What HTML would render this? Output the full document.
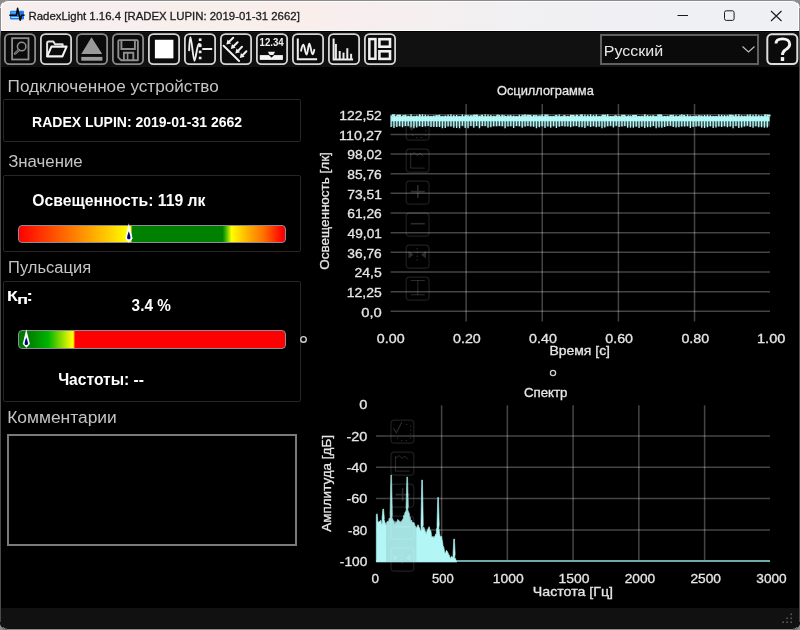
<!DOCTYPE html>
<html><head><meta charset="utf-8">
<style>
*{margin:0;padding:0;box-sizing:border-box}
html,body{width:800px;height:630px;overflow:hidden;background:#8c8c8c}
body{position:relative;font-family:"Liberation Sans",sans-serif}
svg{font-family:"Liberation Sans",sans-serif;will-change:transform}
.abs{position:absolute}
#win{position:absolute;left:0;top:0;width:800px;height:630px;border-radius:8px;overflow:hidden;background:#000}
#frame{position:absolute;left:0;top:0;width:800px;height:630px;border-radius:8px;border:1.2px solid #8c8c8c;border-left-color:transparent;border-right-color:transparent}
.side{position:absolute;top:8px;width:1.3px;height:614px;background:linear-gradient(180deg,#8c8c8c 0px,#8c8c8c 22px,#4a4a4a 30px,#4a4a4a 100%)}
#title{position:absolute;left:0;top:0;width:800px;height:30px;background:linear-gradient(90deg,#f6efee 0%,#f9eeec 38%,#f0f0f3 68%,#eff0f4 100%)}
#toolbar{position:absolute;left:0;top:31px;width:800px;height:36px;background:#111;border-top:1.5px solid #000}
.box{position:absolute;left:3px;width:298px;border:1px solid #262626;border-radius:2px}
.bar{position:absolute;border:1.5px solid #8e8c9c;border-radius:4px}
</style></head><body>
<div id="win">
  <div id="title">
    <div class="abs" style="left:1px;top:1px;width:798px;height:30px;border:1px solid rgba(255,255,255,0.85);border-bottom:none;border-radius:7px 7px 0 0"></div>
    <svg class="abs" style="left:0;top:0" width="40" height="31">
      <rect x="10" y="10.8" width="14" height="8.6" rx="1.2" fill="#1a7cf0"/>
      <rect x="11" y="11.6" width="5" height="2" fill="#7ab8ff" opacity="0.6"/>
      <line x1="11.3" y1="17.4" x2="19" y2="17.4" stroke="#d8ecff" stroke-width="0.9"/>
      <path d="M9.3,15.3 L16.4,15.3 L17.6,8.4 L20.2,20.2 L21.6,15.3 L24.6,15.3" fill="none" stroke="#0d0d0d" stroke-width="1.6" stroke-linejoin="round"/>
    </svg>
    <svg class="abs" style="left:0;top:0" width="800" height="31">
      <line x1="677.5" y1="15.5" x2="688" y2="15.5" stroke="#1a1a1a" stroke-width="1"/>
      <rect x="724.5" y="10.8" width="9.6" height="9.6" rx="1.8" fill="none" stroke="#1a1a1a" stroke-width="1"/>
      <path d="M771,11 L781.5,21 M781.5,11 L771,21" stroke="#1a1a1a" stroke-width="1.1"/>
    </svg>
  </div>
  <div class="abs" style="left:0;top:30px;width:800px;height:1px;background:#fff"></div>
  <div id="toolbar"></div>
  <svg class="abs" style="left:0;top:0" width="800" height="70">
<rect x="4.9" y="34.1" width="30.2" height="30.1" rx="4.5" fill="#0b0b0b" stroke="#8a8a8a" stroke-width="1.8"/>
<rect x="40.9" y="34.1" width="30.2" height="30.1" rx="4.5" fill="#0b0b0b" stroke="#d4d4d4" stroke-width="1.8"/>
<rect x="76.9" y="34.1" width="30.2" height="30.1" rx="4.5" fill="#0b0b0b" stroke="#8a8a8a" stroke-width="1.8"/>
<rect x="112.9" y="34.1" width="30.2" height="30.1" rx="4.5" fill="#0b0b0b" stroke="#8a8a8a" stroke-width="1.8"/>
<rect x="148.9" y="34.1" width="30.2" height="30.1" rx="4.5" fill="#0b0b0b" stroke="#d4d4d4" stroke-width="1.8"/>
<rect x="184.9" y="34.1" width="30.2" height="30.1" rx="4.5" fill="#0b0b0b" stroke="#d4d4d4" stroke-width="1.8"/>
<rect x="220.9" y="34.1" width="30.2" height="30.1" rx="4.5" fill="#0b0b0b" stroke="#d4d4d4" stroke-width="1.8"/>
<rect x="256.9" y="34.1" width="30.2" height="30.1" rx="4.5" fill="#0b0b0b" stroke="#d4d4d4" stroke-width="1.8"/>
<rect x="292.9" y="34.1" width="30.2" height="30.1" rx="4.5" fill="#0b0b0b" stroke="#d4d4d4" stroke-width="1.8"/>
<rect x="328.9" y="34.1" width="30.2" height="30.1" rx="4.5" fill="#0b0b0b" stroke="#d4d4d4" stroke-width="1.8"/>
<rect x="364.9" y="34.1" width="30.2" height="30.1" rx="4.5" fill="#0b0b0b" stroke="#d4d4d4" stroke-width="1.8"/>
<rect x="12.1" y="38.2" width="16.4" height="21.3" fill="none" stroke="#8e8e8e" stroke-width="1.8"/>
<circle cx="21.65" cy="46.6" r="4.25" fill="none" stroke="#8e8e8e" stroke-width="1.5"/>
<line x1="18.9" y1="50" x2="15" y2="53.6" stroke="#8e8e8e" stroke-width="2.4" stroke-linecap="round"/>
<line x1="18.9" y1="50" x2="15" y2="53.6" stroke="#2a2a2a" stroke-width="0.8" stroke-linecap="round"/>
<path d="M47.1,57 L47.1,43.2 Q47.1,41.6 48.8,41.6 L53.4,41.6 L55,44.2 L62.6,44.2 L62.6,46" fill="none" stroke="#e2e2e2" stroke-width="2" stroke-linejoin="round"/>
<path d="M47.2,56.4 L51.4,46.6 L66.6,46.6 L62.4,56.4 Z" fill="#0b0b0b" stroke="#f4f4f4" stroke-width="2.1" stroke-linejoin="round"/>
<path d="M91.5,37.3 L102.2,54.1 L81.3,54.1 Z" fill="#9a9a9a"/>
<rect x="81.3" y="56.9" width="21.1" height="3.8" fill="#9a9a9a"/>
<path d="M118.3,41.3 Q118.3,40.1 119.5,40.1 L136.7,40.1 Q137.9,40.1 137.9,41.3 L137.9,60.2 L121,60.2 L118.3,57.4 Z" fill="none" stroke="#8e8e8e" stroke-width="1.9" stroke-linejoin="round"/>
<path d="M121.4,40.1 L121.4,49 L134.9,49 L134.9,40.1" fill="none" stroke="#8e8e8e" stroke-width="1.9"/>
<path d="M123.9,60.2 L123.9,52.8 L133.3,52.8 L133.3,60.2" fill="none" stroke="#8e8e8e" stroke-width="1.9"/>
<rect x="126.8" y="53" width="1.6" height="7.2" fill="#8e8e8e"/>
<rect x="154.9" y="39.75" width="18.5" height="18.6" fill="#fff"/>
<path d="M189.1,50.3 C189.4,44 189.7,37.3 190.4,37.3 C191.6,37.3 193.2,60.7 194.4,60.7 C195.6,60.7 197,45.5 198.7,44.2 C199.5,43.8 200.2,44.4 200.6,45" fill="none" stroke="#f0f0f0" stroke-width="1.9" stroke-linecap="round"/>
<rect x="198.8" y="38.4" width="2.7" height="2.6" fill="#f0f0f0"/>
<rect x="198.8" y="44.5" width="2.7" height="2.6" fill="#f0f0f0"/>
<rect x="198.8" y="50.6" width="2.7" height="2.6" fill="#f0f0f0"/>
<rect x="198.8" y="56.7" width="2.7" height="2.6" fill="#f0f0f0"/>
<rect x="202.3" y="48" width="9.9" height="2" fill="#f0f0f0"/>
<line x1="223.6" y1="45.7" x2="239.1" y2="61" stroke="#f0f0f0" stroke-width="2" stroke-linecap="round"/>
<line x1="233.20" y1="37.80" x2="229.34" y2="41.50" stroke="#f0f0f0" stroke-width="2" stroke-linecap="round"/>
<path d="M226.30,44.40 L227.54,39.62 L231.13,43.38 Z" fill="#f0f0f0"/>
<line x1="237.60" y1="42.30" x2="233.81" y2="45.97" stroke="#f0f0f0" stroke-width="2" stroke-linecap="round"/>
<path d="M230.80,48.90 L232.00,44.11 L235.62,47.84 Z" fill="#f0f0f0"/>
<line x1="242.00" y1="46.80" x2="238.29" y2="50.45" stroke="#f0f0f0" stroke-width="2" stroke-linecap="round"/>
<path d="M235.30,53.40 L236.47,48.60 L240.12,52.30 Z" fill="#f0f0f0"/>
<line x1="246.40" y1="51.30" x2="242.77" y2="54.93" stroke="#f0f0f0" stroke-width="2" stroke-linecap="round"/>
<path d="M239.80,57.90 L240.93,53.09 L244.61,56.77 Z" fill="#f0f0f0"/>
<text x="259.52" y="46" font-size="10" font-weight="bold" fill="#f0f0f0" textLength="24.25" lengthAdjust="spacingAndGlyphs">12.34</text>
<path d="M267.9,51.8 L275,51.8 Q273.5,55.8 271.5,55.8 Q269.5,55.8 267.9,51.8 Z" fill="#f0f0f0"/>
<rect x="259.8" y="55.1" width="23.1" height="4.8" fill="#f4f4f4"/>
<path d="M268.9,55.1 L274.2,55.1 L271.5,57.7 Z" fill="#0b0b0b"/>
<path d="M297.8,38.6 L297.8,59.2 L317.1,59.2" fill="none" stroke="#f0f0f0" stroke-width="2"/>
<path d="M301.1,50.8 C302,46 302.6,44.7 303.4,44.7 C304.6,44.7 305.3,54.6 306.5,54.6 C307.8,54.6 308.2,43.7 309.3,43.7 C310.5,43.7 311.3,54.3 312.6,54.3 C313.5,54.3 314,51 314.3,49.8" fill="none" stroke="#f0f0f0" stroke-width="1.9" stroke-linecap="round"/>
<path d="M333.6,38.6 L333.6,59.4 L353.1,59.4" fill="none" stroke="#f0f0f0" stroke-width="2"/>
<rect x="334.9" y="43.9" width="2" height="15.5" fill="#e8e8e8"/>
<rect x="338.7" y="51" width="2" height="8.399999999999999" fill="#e8e8e8"/>
<rect x="342.5" y="52.6" width="2" height="6.799999999999997" fill="#e8e8e8"/>
<rect x="346.3" y="48.2" width="2" height="11.199999999999996" fill="#e8e8e8"/>
<rect x="350.1" y="53.8" width="2" height="5.600000000000001" fill="#e8e8e8"/>
<rect x="369.35" y="39.1" width="6.1" height="19.65" fill="none" stroke="#f0f0f0" stroke-width="2.5"/>
<rect x="379.4" y="39.2" width="10.6" height="7.5" fill="none" stroke="#f0f0f0" stroke-width="2.6"/>
<rect x="379.4" y="51.3" width="10.6" height="7.6" fill="none" stroke="#f0f0f0" stroke-width="2.6"/>
    <rect x="601" y="35" width="157" height="29" fill="#0a0a0a" stroke="#606060" stroke-width="2"/>
    <path d="M742.5,46.5 L748.5,52 L754.5,46.5" fill="none" stroke="#bdbdbd" stroke-width="1.2"/>
    <rect x="767.3" y="34.3" width="30" height="29.7" rx="4.5" fill="#0b0b0b" stroke="#dedede" stroke-width="2"/>
    <path d="M776,43.6 C776,40.3 778.8,38.9 782.6,38.9 C786.6,38.9 789.7,40.8 789.7,44.3 C789.7,47.6 787.2,48.6 785.2,50 C783.2,51.4 782.5,52.6 782.5,55" fill="none" stroke="#f4f4f4" stroke-width="2.9"/><rect x="780.8" y="57.1" width="3.4" height="3.9" fill="#f4f4f4"/>
  </svg>

  <div class="box" style="top:99px;height:43px"></div>
  <div class="box" style="top:175px;height:77px"></div>
  <div class="bar" style="top:224.9px;left:18px;width:268px;height:18.1px;background:linear-gradient(90deg,#f00 0%,#ff8000 21%,#ffd000 34%,#ff0 41%,#ff0 42%,#008000 42.6%,#008000 76.5%,#30b000 77.6%,#ff0 79.9%,#ffb000 86%,#ff7000 92%,#f00 99%)"></div>
  <div class="box" style="top:281px;height:121px"></div>
  <div class="bar" style="top:330.4px;left:17.6px;width:268.4px;height:18.6px;background:linear-gradient(90deg,#007800 0%,#008000 4%,#00b400 11%,#ffff00 20%,#ffff00 20.4%,#f00 21.1%,#f00 100%)"></div>
  <div class="abs" style="left:7px;top:434px;width:290px;height:112px;border:2px solid #7a7a7a"></div>

  <svg class="abs" style="left:0;top:0" width="800" height="630">
<text x="7.63" y="92" font-size="16" fill="#c4c4c4" textLength="211.07" lengthAdjust="spacingAndGlyphs">Подключенное устройство</text>
<text x="32.09" y="126.5" font-size="13.8" font-weight="bold" fill="#fff" textLength="210.00" lengthAdjust="spacingAndGlyphs">RADEX LUPIN: 2019-01-31 2662</text>
<text x="8.16" y="167.1" font-size="16" fill="#c4c4c4" textLength="74.49" lengthAdjust="spacingAndGlyphs">Значение</text>
<text x="32.37" y="205.5" font-size="15.9" font-weight="bold" fill="#fff" textLength="173.04" lengthAdjust="spacingAndGlyphs">Освещенность: 119 лк</text>
<text x="8.08" y="273.1" font-size="16" fill="#c4c4c4" textLength="83.00" lengthAdjust="spacingAndGlyphs">Пульсация</text>
<text x="131.62" y="311.3" font-size="16.3" font-weight="bold" fill="#fff" textLength="39.22" lengthAdjust="spacingAndGlyphs">3.4 %</text>
<text x="58.14" y="385" font-size="16" font-weight="bold" fill="#fff" textLength="85.86" lengthAdjust="spacingAndGlyphs">Частоты: --</text>
<text x="7.21" y="422.5" font-size="16" fill="#c4c4c4" textLength="109.58" lengthAdjust="spacingAndGlyphs">Комментарии</text>
<text x="603.72" y="55.9" font-size="15.4" fill="#e8e8e8" textLength="59.41" lengthAdjust="spacingAndGlyphs">Русский</text>
<text stroke="#1c1c1c" stroke-width="0.3" x="28.49" y="19.75" font-size="11.6" fill="#1c1c1c" textLength="271.35" lengthAdjust="spacingAndGlyphs">RadexLight 1.16.4 [RADEX LUPIN: 2019-01-31 2662]</text>
<text x="6.94" y="300.9" font-size="15.5" font-weight="bold" fill="#fff" textLength="10.86" lengthAdjust="spacingAndGlyphs">К</text>
<text x="17.01" y="304.2" font-size="13.3" font-weight="bold" fill="#fff" textLength="11.17" lengthAdjust="spacingAndGlyphs">п</text>
<text x="26.23" y="300.9" font-size="15.5" font-weight="bold" fill="#fff" textLength="6.90" lengthAdjust="spacingAndGlyphs">:</text>
    <path d="M128.8,223.2 L132.6,238.5 L128.8,242.8 L125.1,238.5 Z" fill="#fff"/><path d="M128.8,231.3 C129.8,234 130.5,236.5 130.5,237.8 C130.5,239.8 127.1,239.8 127.1,237.8 C127.1,236.5 127.8,234 128.8,231.3 Z" fill="#00007a"/>
    <path d="M26.3,329.2 L29.9,344 L26.3,347.8 L22.7,344 Z" fill="#fff"/><path d="M26.3,337.4 C27.3,340 28,342.2 28,343.4 C28,345.4 24.6,345.4 24.6,343.4 C24.6,342.2 25.3,340 26.3,337.4 Z" fill="#00007a"/>
<line x1="390.6" y1="114.75" x2="770" y2="114.75" stroke="rgba(255,255,255,0.27)" stroke-width="1.5"/>
<line x1="390.6" y1="134.41" x2="770" y2="134.41" stroke="rgba(255,255,255,0.27)" stroke-width="1.5"/>
<line x1="390.6" y1="154.06" x2="770" y2="154.06" stroke="rgba(255,255,255,0.27)" stroke-width="1.5"/>
<line x1="390.6" y1="173.72" x2="770" y2="173.72" stroke="rgba(255,255,255,0.27)" stroke-width="1.5"/>
<line x1="390.6" y1="193.37" x2="770" y2="193.37" stroke="rgba(255,255,255,0.27)" stroke-width="1.5"/>
<line x1="390.6" y1="213.03" x2="770" y2="213.03" stroke="rgba(255,255,255,0.27)" stroke-width="1.5"/>
<line x1="390.6" y1="232.68" x2="770" y2="232.68" stroke="rgba(255,255,255,0.27)" stroke-width="1.5"/>
<line x1="390.6" y1="252.34" x2="770" y2="252.34" stroke="rgba(255,255,255,0.27)" stroke-width="1.5"/>
<line x1="390.6" y1="271.99" x2="770" y2="271.99" stroke="rgba(255,255,255,0.27)" stroke-width="1.5"/>
<line x1="390.6" y1="291.64" x2="770" y2="291.64" stroke="rgba(255,255,255,0.27)" stroke-width="1.5"/>
<line x1="390.6" y1="311.30" x2="770" y2="311.30" stroke="rgba(255,255,255,0.27)" stroke-width="1.5"/>
<line x1="466.13" y1="104" x2="466.13" y2="321.4" stroke="rgba(255,255,255,0.27)" stroke-width="1.5"/>
<line x1="542.26" y1="104" x2="542.26" y2="321.4" stroke="rgba(255,255,255,0.27)" stroke-width="1.5"/>
<line x1="618.39" y1="104" x2="618.39" y2="321.4" stroke="rgba(255,255,255,0.27)" stroke-width="1.5"/>
<line x1="694.52" y1="104" x2="694.52" y2="321.4" stroke="rgba(255,255,255,0.27)" stroke-width="1.5"/>
<text x="339.15" y="120.05" font-size="13" stroke="#e6e6e6" stroke-width="0.3" fill="#e6e6e6" textLength="42.73" lengthAdjust="spacingAndGlyphs">122,52</text>
<text x="339.12" y="139.71" font-size="13" stroke="#e6e6e6" stroke-width="0.3" fill="#e6e6e6" textLength="42.78" lengthAdjust="spacingAndGlyphs">110,27</text>
<text x="347.28" y="159.36" font-size="13" stroke="#e6e6e6" stroke-width="0.3" fill="#e6e6e6" textLength="34.65" lengthAdjust="spacingAndGlyphs">98,02</text>
<text x="347.28" y="179.02" font-size="13" stroke="#e6e6e6" stroke-width="0.3" fill="#e6e6e6" textLength="34.51" lengthAdjust="spacingAndGlyphs">85,76</text>
<text x="347.21" y="198.67" font-size="13" stroke="#e6e6e6" stroke-width="0.3" fill="#e6e6e6" textLength="34.65" lengthAdjust="spacingAndGlyphs">73,51</text>
<text x="347.21" y="218.33" font-size="13" stroke="#e6e6e6" stroke-width="0.3" fill="#e6e6e6" textLength="34.58" lengthAdjust="spacingAndGlyphs">61,26</text>
<text x="347.63" y="237.98" font-size="13" stroke="#e6e6e6" stroke-width="0.3" fill="#e6e6e6" textLength="34.22" lengthAdjust="spacingAndGlyphs">49,01</text>
<text x="347.35" y="257.63" font-size="13" stroke="#e6e6e6" stroke-width="0.3" fill="#e6e6e6" textLength="34.44" lengthAdjust="spacingAndGlyphs">36,76</text>
<text x="354.50" y="277.29" font-size="13" stroke="#e6e6e6" stroke-width="0.3" fill="#e6e6e6" textLength="27.28" lengthAdjust="spacingAndGlyphs">24,5</text>
<text x="346.85" y="296.94" font-size="13" stroke="#e6e6e6" stroke-width="0.3" fill="#e6e6e6" textLength="34.94" lengthAdjust="spacingAndGlyphs">12,25</text>
<text x="361.21" y="316.6" font-size="13" stroke="#e6e6e6" stroke-width="0.3" fill="#e6e6e6" textLength="20.51" lengthAdjust="spacingAndGlyphs">0,0</text>
<text x="376.88" y="342.7" font-size="13" stroke="#e6e6e6" stroke-width="0.3" fill="#e6e6e6" textLength="27.79" lengthAdjust="spacingAndGlyphs">0.00</text>
<text x="453.01" y="342.7" font-size="13" stroke="#e6e6e6" stroke-width="0.3" fill="#e6e6e6" textLength="27.79" lengthAdjust="spacingAndGlyphs">0.20</text>
<text x="529.14" y="342.7" font-size="13" stroke="#e6e6e6" stroke-width="0.3" fill="#e6e6e6" textLength="27.79" lengthAdjust="spacingAndGlyphs">0.40</text>
<text x="605.27" y="342.7" font-size="13" stroke="#e6e6e6" stroke-width="0.3" fill="#e6e6e6" textLength="27.79" lengthAdjust="spacingAndGlyphs">0.60</text>
<text x="681.40" y="342.7" font-size="13" stroke="#e6e6e6" stroke-width="0.3" fill="#e6e6e6" textLength="27.79" lengthAdjust="spacingAndGlyphs">0.80</text>
<text x="757.01" y="342.7" font-size="13" stroke="#e6e6e6" stroke-width="0.3" fill="#e6e6e6" textLength="28.32" lengthAdjust="spacingAndGlyphs">1.00</text>
<text x="549.48" y="355" font-size="13" stroke="#e6e6e6" stroke-width="0.3" fill="#e6e6e6" textLength="60.52" lengthAdjust="spacingAndGlyphs">Время [с]</text>
<text x="496.92" y="95" font-size="13.2" stroke="#e6e6e6" stroke-width="0.3" fill="#e6e6e6" textLength="96.90" lengthAdjust="spacingAndGlyphs">Осциллограмма</text>
<text transform="translate(328.7,269.2) rotate(-90)" x="-0.61" y="0" font-size="13.4" stroke="#e6e6e6" stroke-width="0.3" fill="#e6e6e6" textLength="117.66" lengthAdjust="spacingAndGlyphs">Освещенность [лк]</text>
<rect x="406.2" y="117.2" width="22.8" height="23" rx="3.5" fill="none" stroke="rgba(255,255,255,0.12)" stroke-width="1.2"/>
<rect x="406.2" y="149.2" width="22.8" height="23" rx="3.5" fill="none" stroke="rgba(255,255,255,0.12)" stroke-width="1.2"/>
<rect x="406.2" y="181.2" width="22.8" height="23" rx="3.5" fill="none" stroke="rgba(255,255,255,0.12)" stroke-width="1.2"/>
<rect x="406.2" y="213.2" width="22.8" height="23" rx="3.5" fill="none" stroke="rgba(255,255,255,0.12)" stroke-width="1.2"/>
<rect x="406.2" y="245.2" width="22.8" height="23" rx="3.5" fill="none" stroke="rgba(255,255,255,0.12)" stroke-width="1.2"/>
<rect x="406.2" y="277.2" width="22.8" height="23" rx="3.5" fill="none" stroke="rgba(255,255,255,0.12)" stroke-width="1.2"/>
<g transform="translate(15.30,-302.40)"><path d="M393.4,427.8 L396.3,432.2 L401.8,421.4" fill="none" stroke="rgba(255,255,255,0.17)" stroke-width="1.1"/><rect x="406.0" y="423.2" width="1.2" height="1.2" fill="rgba(255,255,255,0.17)"/><rect x="410.0" y="425.2" width="1.2" height="1.2" fill="rgba(255,255,255,0.17)"/><rect x="410.0" y="429.0" width="1.2" height="1.2" fill="rgba(255,255,255,0.17)"/><rect x="410.0" y="432.59999999999997" width="1.2" height="1.2" fill="rgba(255,255,255,0.17)"/><rect x="409.7" y="436.9" width="1.2" height="1.2" fill="rgba(255,255,255,0.17)"/><rect x="405.4" y="439.4" width="1.2" height="1.2" fill="rgba(255,255,255,0.17)"/><rect x="400.9" y="439.4" width="1.2" height="1.2" fill="rgba(255,255,255,0.17)"/><rect x="396.9" y="436.9" width="1.2" height="1.2" fill="rgba(255,255,255,0.17)"/><path d="M395.4,455.5 V470.5 H409.4 M396,457.5 L399,455 L402,457.8 L404.8,455.6 L408,459" fill="none" stroke="rgba(255,255,255,0.17)" stroke-width="1"/><path d="M402.5,487.5 V500.5 M395.5,494 H409.5" fill="none" stroke="rgba(255,255,255,0.17)" stroke-width="1.6"/><path d="M395.5,526.1 H409.5" fill="none" stroke="rgba(255,255,255,0.17)" stroke-width="1.6"/><path d="M393.2,553.5 L398.2,557.2 L393.2,560.9 Z M410.7,553.5 L405.7,557.2 L410.7,560.9 Z" fill="rgba(255,255,255,0.17)"/><path d="M401.9,550.5 V552 M401.9,554.2 V555.7 M401.9,557.9 V559.4 M401.9,561.6 V563.1" stroke="rgba(255,255,255,0.17)" stroke-width="1.1"/><path d="M395.5,582.9 H409.5 M395.5,597.2 H409.5 M402.5,582.9 V597.2" fill="none" stroke="rgba(255,255,255,0.17)" stroke-width="1"/></g>
<rect x="391.1" y="116.2" width="378.6" height="5.2" fill="#b2f6f6"/>
<rect x="391.1" y="121.4" width="378.6" height="5" fill="#b2f6f6" opacity="0.3"/>
<path d="M391.10,115.32V126.93M393.95,115.13V128.11M396.80,115.37V127.07M399.65,115.22V126.26M402.50,115.79V127.37M405.35,114.81V126.04M408.20,115.82V126.03M411.05,114.28V127.53M413.90,116.13V128.26M416.75,115.43V127.43M419.60,114.23V126.19M422.45,114.32V127.12M425.30,114.68V126.28M428.15,115.13V125.88M431.00,115.88V126.90M433.85,115.48V127.10M436.70,115.52V127.05M439.55,114.76V126.94M442.40,116.19V128.29M445.25,115.62V127.90M448.10,114.66V126.59M450.95,114.34V126.52M453.80,115.00V127.72M456.65,114.97V127.92M459.50,115.89V128.20M462.35,114.62V125.80M465.20,115.14V128.08M468.05,114.99V128.25M470.90,115.46V125.98M473.75,114.74V127.75M476.60,114.87V126.02M479.45,115.72V128.21M482.30,114.69V126.09M485.15,114.32V126.05M488.00,114.56V127.79M490.85,115.09V127.20M493.70,115.66V126.28M496.55,115.49V126.13M499.40,115.04V126.09M502.25,114.74V126.33M505.10,115.81V128.23M507.95,115.97V126.56M510.80,114.99V126.33M513.65,115.48V127.94M516.50,116.18V126.05M519.35,114.72V126.33M522.20,114.86V127.73M525.05,114.35V126.54M527.90,115.37V126.03M530.75,115.40V126.41M533.60,115.11V126.73M536.45,115.17V128.20M539.30,115.93V127.24M542.15,114.51V126.26M545.00,115.84V128.07M547.85,114.58V126.42M550.70,116.08V127.65M553.55,116.10V126.29M556.40,115.41V128.01M559.25,114.41V126.85M562.10,116.13V125.90M564.95,115.61V126.40M567.80,115.85V126.44M570.65,114.79V127.29M573.50,115.64V126.24M576.35,114.66V125.97M579.20,115.90V127.20M582.05,114.76V127.34M584.90,114.61V128.09M587.75,114.74V125.84M590.60,114.32V126.91M593.45,114.94V126.24M596.30,114.46V127.23M599.15,115.98V126.71M602.00,115.51V128.25M604.85,115.37V127.53M607.70,114.27V126.15M610.55,116.02V125.84M613.40,116.13V127.55M616.25,115.47V125.85M619.10,115.66V127.01M621.95,116.20V126.60M624.80,115.29V125.99M627.65,116.00V127.64M630.50,115.61V127.64M633.35,116.03V127.78M636.20,115.57V126.68M639.05,115.94V128.05M641.90,115.78V126.84M644.75,115.35V127.96M647.60,114.96V127.36M650.45,115.42V127.26M653.30,115.48V126.00M656.15,115.96V128.28M659.00,114.98V127.62M661.85,115.36V127.64M664.70,115.88V126.90M667.55,115.70V126.01M670.40,115.40V125.87M673.25,114.66V127.00M676.10,115.19V127.55M678.95,116.04V127.34M681.80,114.22V126.44M684.65,115.56V126.55M687.50,114.54V126.31M690.35,115.52V128.06M693.20,115.98V126.90M696.05,115.53V126.62M698.90,115.06V126.30M701.75,116.03V127.81M704.60,114.97V128.00M707.45,114.83V127.26M710.30,115.19V126.14M713.15,115.90V127.89M716.00,116.10V127.58M718.85,114.54V126.49M721.70,114.75V126.93M724.55,115.03V126.34M727.40,115.19V127.36M730.25,115.88V126.59M733.10,115.10V128.26M735.95,114.26V125.99M738.80,114.28V127.98M741.65,115.34V127.57M744.50,115.78V126.57M747.35,114.47V125.85M750.20,114.25V126.94M753.05,114.67V127.87M755.90,114.29V126.15M758.75,115.09V127.37M761.60,115.51V127.37M764.45,116.12V127.82M767.30,114.60V127.51" stroke="#b4f8f8" stroke-width="1.35" fill="none"/>
<rect x="392.00" y="114.31" width="3.16" height="2.09" fill="#b2f6f6"/><rect x="397.00" y="114.65" width="4.00" height="1.75" fill="#b2f6f6"/><rect x="402.56" y="115.10" width="3.94" height="1.30" fill="#b2f6f6"/><rect x="418.83" y="115.11" width="1.95" height="1.29" fill="#b2f6f6"/><rect x="435.25" y="115.24" width="3.78" height="1.16" fill="#b2f6f6"/><rect x="465.38" y="115.02" width="1.79" height="1.38" fill="#b2f6f6"/><rect x="469.66" y="115.35" width="3.21" height="1.05" fill="#b2f6f6"/><rect x="473.81" y="114.74" width="4.30" height="1.66" fill="#b2f6f6"/><rect x="480.64" y="114.97" width="1.99" height="1.43" fill="#b2f6f6"/><rect x="496.56" y="114.68" width="2.27" height="1.72" fill="#b2f6f6"/><rect x="501.24" y="115.40" width="3.74" height="1.00" fill="#b2f6f6"/><rect x="507.01" y="115.40" width="2.59" height="1.00" fill="#b2f6f6"/><rect x="522.11" y="115.09" width="3.38" height="1.31" fill="#b2f6f6"/><rect x="526.35" y="114.82" width="4.89" height="1.58" fill="#b2f6f6"/><rect x="533.81" y="115.20" width="3.47" height="1.20" fill="#b2f6f6"/><rect x="538.22" y="115.54" width="3.39" height="0.86" fill="#b2f6f6"/><rect x="544.44" y="114.47" width="2.44" height="1.93" fill="#b2f6f6"/><rect x="554.84" y="115.10" width="2.61" height="1.30" fill="#b2f6f6"/><rect x="563.09" y="115.19" width="2.18" height="1.21" fill="#b2f6f6"/><rect x="570.55" y="114.96" width="4.06" height="1.44" fill="#b2f6f6"/><rect x="575.96" y="114.87" width="2.19" height="1.53" fill="#b2f6f6"/><rect x="579.78" y="114.51" width="2.95" height="1.89" fill="#b2f6f6"/><rect x="601.71" y="114.71" width="4.66" height="1.69" fill="#b2f6f6"/><rect x="614.22" y="115.24" width="1.97" height="1.16" fill="#b2f6f6"/><rect x="621.12" y="114.82" width="4.26" height="1.58" fill="#b2f6f6"/><rect x="627.69" y="115.19" width="1.56" height="1.21" fill="#b2f6f6"/><rect x="632.06" y="114.96" width="4.89" height="1.44" fill="#b2f6f6"/><rect x="643.89" y="114.35" width="1.75" height="2.05" fill="#b2f6f6"/><rect x="652.08" y="115.39" width="2.15" height="1.01" fill="#b2f6f6"/><rect x="657.20" y="114.38" width="4.74" height="2.02" fill="#b2f6f6"/><rect x="669.48" y="114.86" width="3.13" height="1.54" fill="#b2f6f6"/><rect x="678.94" y="115.26" width="2.13" height="1.14" fill="#b2f6f6"/><rect x="682.76" y="114.97" width="2.18" height="1.43" fill="#b2f6f6"/><rect x="698.96" y="115.58" width="3.60" height="0.82" fill="#b2f6f6"/><rect x="728.73" y="114.74" width="4.03" height="1.66" fill="#b2f6f6"/><rect x="734.59" y="115.13" width="1.54" height="1.27" fill="#b2f6f6"/><rect x="747.61" y="115.60" width="3.37" height="0.80" fill="#b2f6f6"/><rect x="764.11" y="114.37" width="2.40" height="2.03" fill="#b2f6f6"/><rect x="767.74" y="114.63" width="2.81" height="1.77" fill="#b2f6f6"/>
<line x1="376" y1="436.00" x2="770" y2="436.00" stroke="rgba(255,255,255,0.27)" stroke-width="1.5"/>
<line x1="376" y1="467.30" x2="770" y2="467.30" stroke="rgba(255,255,255,0.27)" stroke-width="1.5"/>
<line x1="376" y1="498.60" x2="770" y2="498.60" stroke="rgba(255,255,255,0.27)" stroke-width="1.5"/>
<line x1="376" y1="529.90" x2="770" y2="529.90" stroke="rgba(255,255,255,0.27)" stroke-width="1.5"/>
<line x1="376" y1="561.20" x2="770" y2="561.20" stroke="rgba(255,255,255,0.27)" stroke-width="1.5"/>
<line x1="441.60" y1="405.3" x2="441.60" y2="561" stroke="rgba(255,255,255,0.27)" stroke-width="1.5"/>
<line x1="507.35" y1="405.3" x2="507.35" y2="561" stroke="rgba(255,255,255,0.27)" stroke-width="1.5"/>
<line x1="573.10" y1="405.3" x2="573.10" y2="561" stroke="rgba(255,255,255,0.27)" stroke-width="1.5"/>
<line x1="638.85" y1="405.3" x2="638.85" y2="561" stroke="rgba(255,255,255,0.27)" stroke-width="1.5"/>
<line x1="704.60" y1="405.3" x2="704.60" y2="561" stroke="rgba(255,255,255,0.27)" stroke-width="1.5"/>
<text x="359.22" y="409.4" font-size="13" stroke="#e6e6e6" stroke-width="0.3" fill="#e6e6e6" textLength="8.11" lengthAdjust="spacingAndGlyphs">0</text>
<text x="346.45" y="440.7" font-size="13" stroke="#e6e6e6" stroke-width="0.3" fill="#e6e6e6" textLength="20.86" lengthAdjust="spacingAndGlyphs">-20</text>
<text x="346.45" y="472.0" font-size="13" stroke="#e6e6e6" stroke-width="0.3" fill="#e6e6e6" textLength="20.86" lengthAdjust="spacingAndGlyphs">-40</text>
<text x="346.45" y="503.3" font-size="13" stroke="#e6e6e6" stroke-width="0.3" fill="#e6e6e6" textLength="20.86" lengthAdjust="spacingAndGlyphs">-60</text>
<text x="348.00" y="534.6" font-size="13" stroke="#e6e6e6" stroke-width="0.3" fill="#e6e6e6" textLength="19.27" lengthAdjust="spacingAndGlyphs">-80</text>
<text x="339.88" y="565.9" font-size="13" stroke="#e6e6e6" stroke-width="0.3" fill="#e6e6e6" textLength="27.42" lengthAdjust="spacingAndGlyphs">-100</text>
<text x="371.56" y="582.7" font-size="13" stroke="#e6e6e6" stroke-width="0.3" fill="#e6e6e6" textLength="7.53" lengthAdjust="spacingAndGlyphs">0</text>
<text x="431.93" y="582.7" font-size="13" stroke="#e6e6e6" stroke-width="0.3" fill="#e6e6e6" textLength="21.72" lengthAdjust="spacingAndGlyphs">500</text>
<text x="492.81" y="582.7" font-size="13" stroke="#e6e6e6" stroke-width="0.3" fill="#e6e6e6" textLength="30.92" lengthAdjust="spacingAndGlyphs">1000</text>
<text x="558.56" y="582.7" font-size="13" stroke="#e6e6e6" stroke-width="0.3" fill="#e6e6e6" textLength="30.92" lengthAdjust="spacingAndGlyphs">1500</text>
<text x="624.66" y="582.7" font-size="13" stroke="#e6e6e6" stroke-width="0.3" fill="#e6e6e6" textLength="30.56" lengthAdjust="spacingAndGlyphs">2000</text>
<text x="690.41" y="582.7" font-size="13" stroke="#e6e6e6" stroke-width="0.3" fill="#e6e6e6" textLength="30.56" lengthAdjust="spacingAndGlyphs">2500</text>
<text x="756.30" y="582.7" font-size="13" stroke="#e6e6e6" stroke-width="0.3" fill="#e6e6e6" textLength="30.42" lengthAdjust="spacingAndGlyphs">3000</text>
<text x="532.87" y="596" font-size="13" stroke="#e6e6e6" stroke-width="0.3" fill="#e6e6e6" textLength="80.19" lengthAdjust="spacingAndGlyphs">Частота [Гц]</text>
<text x="523.94" y="397.1" font-size="13.2" stroke="#e6e6e6" stroke-width="0.3" fill="#e6e6e6" textLength="43.53" lengthAdjust="spacingAndGlyphs">Спектр</text>
<text transform="translate(330.8,531.75) rotate(-90)" x="0.00" y="0" font-size="13.4" stroke="#e6e6e6" stroke-width="0.3" fill="#e6e6e6" textLength="96.72" lengthAdjust="spacingAndGlyphs">Амплитуда [дБ]</text>
<line x1="376" y1="561" x2="770" y2="561" stroke="#72aaaa" stroke-width="2"/>
<polygon points="376.3,562 376.3,514.5 377.2,513.7 377.8,521.193285423647 378.3,522.0737183656342 378.8,522.1446194098103 379.3,522.1158409080866 379.8,520.9676754391678 380.3,521.8914399893295 380.8,519.9328167305076 381.3,522.2299924940099 381.8,524.6587414943946 382.3,523.6867185700382 382.09999999999997,518.0400000000001 382.84999999999997,509 383.55,509 384.3,518.0400000000001 383.7,522.672881573602 384.2,520.16225908689 384.7,522.301020952903 385.2,522.5890330643834 385.7,524.5400347495549 386.2,524.8366118013699 386.7,522.0419654066845 387.2,521.6935353614844 387.7,520.8943435712356 388.2,522.0323051897874 388.7,520.8003214452133 389.2,518.1107334795457 389.7,519.4008703725799 390.2,517.0040557388764 390.04999999999995,514.96 390.84999999999997,475 391.55,475 392.35,514.96 391.7,519.7358480654916 392.2,518.5654375441609 392.7,518.6456795590482 393.2,522.0284951831177 393.7,520.5102604239843 394.2,521.1295397415191 394.7,524.183747548243 395.2,523.9917048493977 395.7,521.6257765367901 396.2,523.2767295646403 396.7,521.4255151003865 397.2,521.3690575272019 397.7,519.3552944465081 398.2,521.2111232034815 398.7,519.910054211542 399.2,520.9930057994151 399.7,522.0099733682447 400.2,521.3561244731322 400.7,522.4843792196831 401.2,521.5024879542437 401.7,521.0805318248159 402.2,520.0084470828023 402.7,519.2643491224624 403.2,518.7299519917046 403.7,515.310825981998 404.2,515.9693895985527 404.7,513.3812699572093 405.2,511.7918653811301 405.7,511.91925783887064 406.2,510.0183845972161 406.04999999999995,506.48 406.84999999999997,477 407.55,477 408.35,506.48 407.7,510.0905379387086 408.2,510.819898835958 408.7,512.5882745625842 409.2,512.8490696411811 409.7,518.1203186020615 410.2,516.8731698024087 410.7,520.199344071332 411.2,521.503618846042 411.7,519.8578161132112 412.2,523.1207625727375 412.7,522.271790322694 413.2,523.451260252982 413.7,522.1290508378225 414.2,522.9495267798366 414.7,524.3789423614434 415.2,527.8565756786917 415.7,525.8955360123083 416.2,527.3516898531775 416.7,527.5748970227121 417.2,527.2812069208353 417.7,525.0353551351029 418.2,524.7353382561854 418.7,525.7457124928846 419.2,528.2152629803701 419.7,527.7457691810075 420.2,530.6948737807509 420.7,530.6011253682923 421.2,530.5510218214002 420.95,524.95 421.75,480 422.45000000000005,480 423.25000000000006,524.95 422.6,527.217221055817 423.1,529.876560592135 423.6,526.8917755653497 424.1,527.7403697136135 424.6,529.8546481218964 425.1,532.0878789937066 425.6,531.4878704852027 426.1,534.2074323821688 426.6,532.2444609187143 427.1,530.7498411818972 427.6,530.0137599541227 428.1,528.767928881616 428.6,527.4502279431058 429.1,526.6763777427943 429.6,528.0053586795165 430.1,530.9895258065176 430.6,530.3168942861589 431.1,531.9553669233552 431.6,536.9574371481098 432.1,537.1072983723546 432.6,536.6988416679341 433.1,536.1594771323337 433.6,537.3006727062185 434.1,537.9441456377556 434.6,536.2581283247702 435.1,535.6496233021171 435.6,533.9782631392252 436.1,535.5314219150142 436.6,528.7047079039015 437.1,527.1294054349468 437.0,524.6500000000001 437.75,497.5 438.45000000000005,497.5 439.20000000000005,524.6500000000001 438.6,530.4829736997381 439.1,529.31782984689 439.6,533.7413261548055 440.1,536.5726887337235 440.6,536.2172777389645 441.1,537.3882972259638 441.6,536.2745512843646 442.1,539.9905766099215 442.6,541.7442517691956 443.1,546.4531484704173 443.6,546.4434013638785 444.1,548.7000957232001 444.6,552.1977598338225 445.1,553.0272085468599 445.6,552.9232242231892 446.1,550.7513279666932 446.6,550.3621087953767 447.1,551.0677493965873 447.6,551.9329358404646 448.1,552.997939041537 448.6,554.8254594620512 449.1,554.6688203600064 449.6,556.0730690595799 450.1,558.4961739746352 450.6,558.0714108271455 451.1,556.6729545737221 451.6,556.1978318421317 452.1,556.6831320328741 452.6,556.8852397320715 453.1,558.1713924292368 453.05,553.9 453.75,539 454.45000000000005,539 455.15000000000003,553.9 454.6,558.3024607073808 455.1,558.4756377816874 455.6,558.3562439456728 456.1,561.0352722548282 456.6,561.5996738947797 457,562" fill="#b2f6f6" stroke="#b2f6f6" stroke-width="0.6"/>
<rect x="386" y="405" width="30.5" height="157" fill="rgba(0,0,0,0.08)"/>
<rect x="391" y="420.2" width="22.8" height="23" rx="3.5" fill="none" stroke="rgba(255,255,255,0.12)" stroke-width="1.2"/>
<rect x="391" y="452.2" width="22.8" height="23" rx="3.5" fill="none" stroke="rgba(255,255,255,0.12)" stroke-width="1.2"/>
<rect x="391" y="484.2" width="22.8" height="23" rx="3.5" fill="none" stroke="rgba(255,255,255,0.12)" stroke-width="1.2"/>
<rect x="391" y="516.2" width="22.8" height="23" rx="3.5" fill="none" stroke="rgba(255,255,255,0.12)" stroke-width="1.2"/>
<rect x="391" y="548.2" width="22.8" height="23" rx="3.5" fill="none" stroke="rgba(255,255,255,0.12)" stroke-width="1.2"/>
<g transform="translate(0.10,0.60)"><path d="M393.4,427.8 L396.3,432.2 L401.8,421.4" fill="none" stroke="rgba(255,255,255,0.17)" stroke-width="1.1"/><rect x="406.0" y="423.2" width="1.2" height="1.2" fill="rgba(255,255,255,0.17)"/><rect x="410.0" y="425.2" width="1.2" height="1.2" fill="rgba(255,255,255,0.17)"/><rect x="410.0" y="429.0" width="1.2" height="1.2" fill="rgba(255,255,255,0.17)"/><rect x="410.0" y="432.59999999999997" width="1.2" height="1.2" fill="rgba(255,255,255,0.17)"/><rect x="409.7" y="436.9" width="1.2" height="1.2" fill="rgba(255,255,255,0.17)"/><rect x="405.4" y="439.4" width="1.2" height="1.2" fill="rgba(255,255,255,0.17)"/><rect x="400.9" y="439.4" width="1.2" height="1.2" fill="rgba(255,255,255,0.17)"/><rect x="396.9" y="436.9" width="1.2" height="1.2" fill="rgba(255,255,255,0.17)"/><path d="M395.4,455.5 V470.5 H409.4 M396,457.5 L399,455 L402,457.8 L404.8,455.6 L408,459" fill="none" stroke="rgba(255,255,255,0.17)" stroke-width="1"/><path d="M402.5,487.5 V500.5 M395.5,494 H409.5" fill="none" stroke="rgba(255,255,255,0.17)" stroke-width="1.6"/><path d="M395.5,526.1 H409.5" fill="none" stroke="rgba(255,255,255,0.17)" stroke-width="1.6"/><path d="M393.2,553.5 L398.2,557.2 L393.2,560.9 Z M410.7,553.5 L405.7,557.2 L410.7,560.9 Z" fill="rgba(255,255,255,0.17)"/><path d="M401.9,550.5 V552 M401.9,554.2 V555.7 M401.9,557.9 V559.4 M401.9,561.6 V563.1" stroke="rgba(255,255,255,0.17)" stroke-width="1.1"/></g>
<circle cx="303.5" cy="339.4" r="2.8" fill="none" stroke="#cfcfcf" stroke-width="1.4"/>
<circle cx="553" cy="373" r="2.6" fill="none" stroke="#cfcfcf" stroke-width="1.3"/>
  </svg>

  <div class="abs" style="left:0;top:607.5px;width:800px;height:21px;background:#111"></div>
  <svg class="abs" style="left:770px;top:600px" width="30" height="30"><rect x="20.4" y="13.5" width="1.6" height="1.6" fill="#5a5a5a"/><rect x="16.3" y="17.5" width="1.6" height="1.6" fill="#5a5a5a"/><rect x="20.4" y="17.5" width="1.6" height="1.6" fill="#5a5a5a"/><rect x="12.3" y="21.4" width="1.6" height="1.6" fill="#5a5a5a"/><rect x="16.3" y="21.4" width="1.6" height="1.6" fill="#5a5a5a"/><rect x="20.4" y="21.4" width="1.6" height="1.6" fill="#5a5a5a"/></svg>
</div>
<div id="frame"></div>
<div class="side" style="left:0"></div><div class="side" style="left:798.7px"></div>
</body></html>
